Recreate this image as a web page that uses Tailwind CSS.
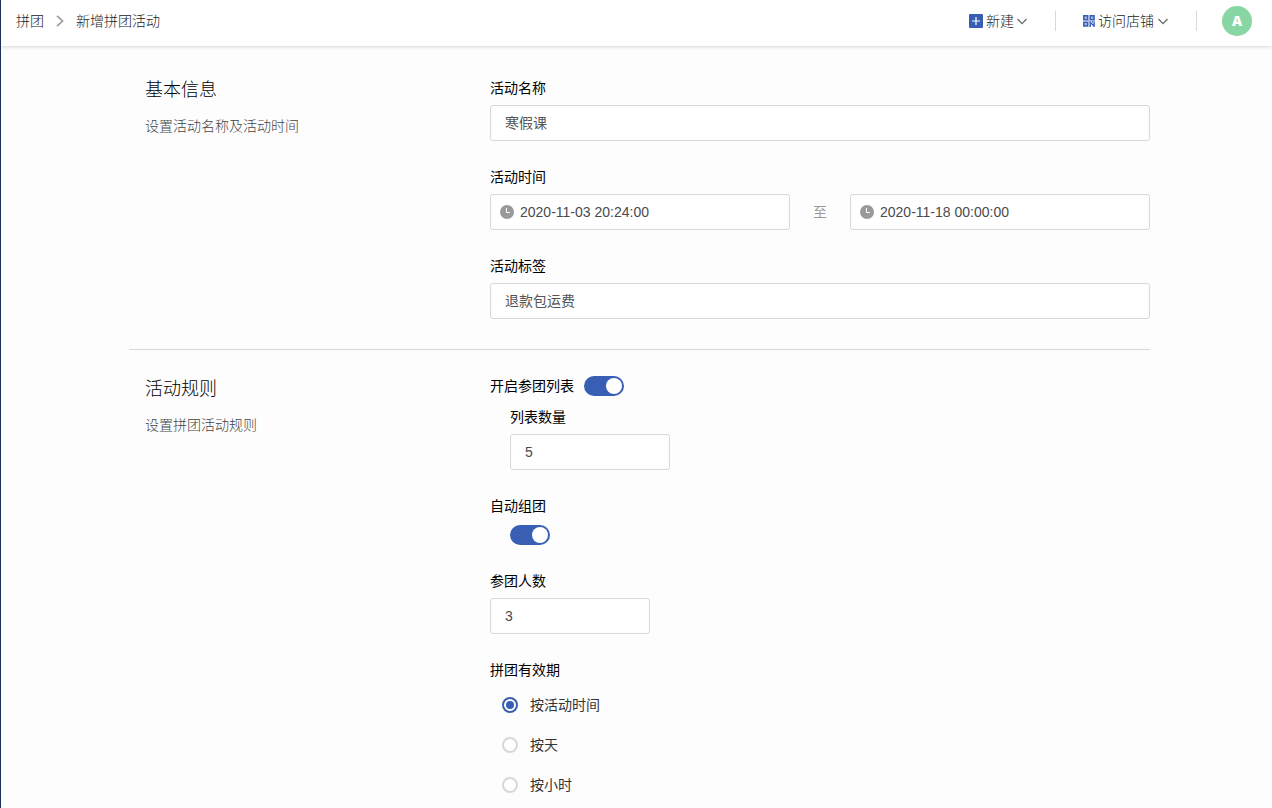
<!DOCTYPE html>
<html lang="zh-CN">
<head>
<meta charset="utf-8">
<meta name="viewport" content="width=device-width, initial-scale=1">
<title>新增拼团活动</title>
<script src="https://cdn.jsdelivr.net/npm/@tailwindcss/browser@4"></script>
</head>
<body class="flex min-h-screen flex-col border-l border-[#1d2f5e] bg-[#fdfdfd] font-['Liberation_Sans','Noto_Sans_CJK_SC',sans-serif] text-sm leading-5 text-black">
<header class="z-10 flex h-[46px] items-center justify-between bg-white pr-5 pb-1 pl-[15px] font-light text-[#222] shadow-[0_1px_4px_rgba(0,0,0,0.16)]">
  <nav class="flex items-center" aria-label="面包屑">
    <a href="#">拼团</a>
    <svg class="mx-3 h-3 w-2" viewBox="0 0 8 12" fill="none" stroke="#999" stroke-width="1.6"><path d="M1 .8 6.6 6 1 11.2"/></svg>
    <span>新增拼团活动</span>
  </nav>
  <div class="flex items-center">
    <button class="flex items-center" type="button">
      <svg class="mr-[3px] h-[14px] w-[14px]" viewBox="0 0 14 14"><rect width="14" height="14" rx="1" fill="#385fb3"/><path d="M7 3v8M3 7h8" stroke="#fff" stroke-width="1.2"/></svg>
      新建
      <svg class="ml-[3px] h-[7px] w-[10px]" viewBox="0 0 10 7" fill="none" stroke="#666" stroke-width="1.2"><path d="m.5 1 4.5 4.6L9.5 1"/></svg>
    </button>
    <span class="mx-7 h-5 w-px bg-[#d8d8d8]"></span>
    <button class="-ml-px flex items-center" type="button">
      <svg class="mr-[3px] h-3 w-3" viewBox="0 0 12 12" fill="none" stroke="#385fb3"><path d="M.8.8h3.9v3.9H.8zM7.2.8h3.9v3.9H7.2zM.8 7.2h3.9v3.9H.8z" fill="#9db2de" stroke-width="1.5"/><path d="M6 0v12M0 6h12" stroke="#9db2de" stroke-width=".6"/><path d="M7.2 12V7.2l3.9 4V6.6M9 6.8h1" stroke-width="1.4"/></svg>
      访问店铺
      <svg class="ml-[4px] h-[7px] w-[10px]" viewBox="0 0 10 7" fill="none" stroke="#666" stroke-width="1.2"><path d="m.5 1 4.5 4.6L9.5 1"/></svg>
    </button>
    <span class="mr-[25px] ml-7 h-5 w-px bg-[#d8d8d8]"></span>
    <button class="flex size-[30px] items-center justify-center rounded-full bg-[#87d6a4] font-['Open_Sans',sans-serif] text-sm font-extrabold text-white" type="button" aria-label="账户">A</button>
  </div>
</header>

<main class="flex-1 pl-[6px]">
  <form class="mx-auto max-w-[1021px]">
    <section class="flex border-b border-[#d8d8d8] pt-8 pb-[30px] pl-4">
      <div class="w-[345px] shrink-0">
        <h2 class="text-lg leading-6 font-light">基本信息</h2>
        <p class="mt-[14px] font-light text-[#444]">设置活动名称及活动时间</p>
      </div>
      <div class="flex min-w-0 flex-1 flex-col gap-[26px]">
        <div class="flex flex-col gap-[7px]">
          <label for="name">活动名称</label>
          <input id="name" type="text" value="寒假课" class="h-9 w-full rounded-[3px] border border-[#d8d8d8] bg-white px-[14px] pb-[2px] text-[#555] outline-none">
        </div>
        <div class="flex flex-col gap-[7px]">
          <label for="start">活动时间</label>
          <div class="flex items-center">
            <div class="flex h-9 min-w-0 flex-1 items-center rounded-[3px] border border-[#d8d8d8] bg-white pl-[9px]">
              <svg class="mr-[6px] size-[14px] shrink-0" viewBox="0 0 14 14"><circle cx="7" cy="7" r="7" fill="#999"/><path d="M6.5 3v4.5H10" fill="none" stroke="#fff"/></svg>
              <input id="start" type="text" value="2020-11-03 20:24:00" class="min-w-0 flex-1 text-[#4a4a4a] outline-none">
            </div>
            <span class="w-[60px] shrink-0 text-center text-[#999]">至</span>
            <div class="flex h-9 min-w-0 flex-1 items-center rounded-[3px] border border-[#d8d8d8] bg-white pl-[9px]">
              <svg class="mr-[6px] size-[14px] shrink-0" viewBox="0 0 14 14"><circle cx="7" cy="7" r="7" fill="#999"/><path d="M6.5 3v4.5H10" fill="none" stroke="#fff"/></svg>
              <input type="text" aria-label="结束时间" value="2020-11-18 00:00:00" class="min-w-0 flex-1 text-[#4a4a4a] outline-none">
            </div>
          </div>
        </div>
        <div class="flex flex-col gap-[7px]">
          <label for="tag">活动标签</label>
          <input id="tag" type="text" value="退款包运费" class="h-9 w-full rounded-[3px] border border-[#d8d8d8] bg-white px-[14px] pb-[2px] text-[#555] outline-none">
        </div>
      </div>
    </section>

    <section class="flex pt-[26px] pl-4">
      <div class="w-[345px] shrink-0 pt-px">
        <h2 class="text-lg leading-6 font-light">活动规则</h2>
        <p class="mt-[14px] font-light text-[#444]">设置拼团活动规则</p>
      </div>
      <div class="flex min-w-0 flex-1 flex-col gap-[26px]">
        <div>
          <div class="flex items-center gap-[10px]">
            <label for="list">开启参团列表</label>
            <input id="list" type="checkbox" role="switch" checked class="flex h-5 w-10 appearance-none items-center rounded-full bg-[#ccc] p-[2px] before:size-4 before:rounded-full before:bg-white checked:justify-end checked:bg-[#385fb3]">
          </div>
          <div class="mt-[11px] flex flex-col gap-[7px] pl-5">
            <label for="count">列表数量</label>
            <input id="count" type="text" value="5" class="h-9 w-40 rounded-[3px] border border-[#d8d8d8] bg-white px-[14px] text-[#4a4a4a] outline-none">
          </div>
        </div>
        <div class="flex flex-col gap-[9px]">
          <label for="auto">自动组团</label>
          <input id="auto" type="checkbox" role="switch" checked class="ml-5 flex h-5 w-10 appearance-none items-center rounded-full bg-[#ccc] p-[2px] before:size-4 before:rounded-full before:bg-white checked:justify-end checked:bg-[#385fb3]">
        </div>
        <div class="flex flex-col gap-[7px]">
          <label for="people">参团人数</label>
          <input id="people" type="text" value="3" class="h-9 w-40 rounded-[3px] border border-[#d8d8d8] bg-white px-[14px] text-[#4a4a4a] outline-none">
        </div>
        <fieldset>
          <legend class="mb-[5px]">拼团有效期</legend>
          <label class="flex h-10 items-center gap-3 pl-3 text-[#333]">
            <input type="radio" name="validity" checked class="flex size-4 appearance-none items-center justify-center rounded-full border-2 border-[#d8d8d8] bg-white before:size-2 before:rounded-full checked:border-[#385fb3] checked:before:bg-[#385fb3]">按活动时间
          </label>
          <label class="flex h-10 items-center gap-3 pl-3 text-[#333]">
            <input type="radio" name="validity" class="flex size-4 appearance-none items-center justify-center rounded-full border-2 border-[#d8d8d8] bg-white before:size-2 before:rounded-full checked:border-[#385fb3] checked:before:bg-[#385fb3]">按天
          </label>
          <label class="flex h-10 items-center gap-3 pl-3 text-[#333]">
            <input type="radio" name="validity" class="flex size-4 appearance-none items-center justify-center rounded-full border-2 border-[#d8d8d8] bg-white before:size-2 before:rounded-full checked:border-[#385fb3] checked:before:bg-[#385fb3]">按小时
          </label>
        </fieldset>
      </div>
    </section>
  </form>
</main>
</body>
</html>
